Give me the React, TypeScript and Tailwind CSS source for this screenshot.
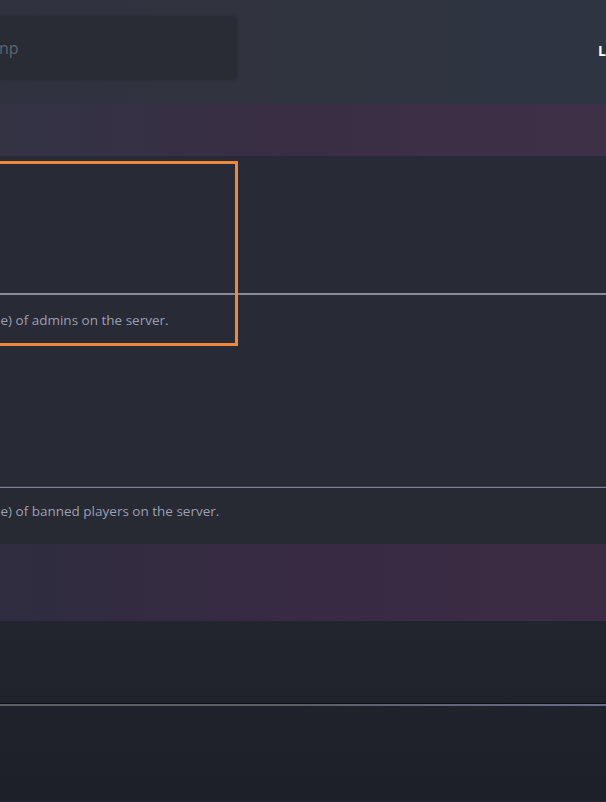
import React from "react";

function Description({ text }: { text: string }) {
  return (
    <div className="-ml-[22px] whitespace-nowrap text-[13.5px] leading-[16px] text-[#9c9fb2]">
      {text}
    </div>
  );
}

export default function App() {
  return (
    <div
      className="relative h-[802px] w-[606px] overflow-hidden bg-[#282b35]"
      style={{ fontFamily: '"Open Sans", "Noto Sans", sans-serif' }}
    >
      {/* Header */}
      <div className="flex h-[104px] items-start bg-gradient-to-r from-[#30333f] via-[#30343f] to-[#2f3443]">
        <div className="mt-[17px] flex h-[62px] w-[236px] shrink-0 items-center bg-[#292c35] shadow-[0_0_3px_rgba(0,0,0,0.35)]">
          <span className="-ml-[1px] text-[16px] text-[#5d6372]">np</span>
        </div>
        <div className="ml-[362px] mt-[40px] whitespace-nowrap text-[14px] font-bold tracking-wide text-white">
          LOGIN
        </div>
      </div>

      {/* Band 1 */}
      <div className="h-[52px] bg-gradient-to-r from-[#333344] via-[#3a2e45] to-[#3e3047]" />

      {/* Section 1 */}
      <div className="flex flex-col bg-[#282b35]">
        <div className="h-[137px]" />
        <div className="h-[2px] bg-[#878a93]" />
        <div className="h-[52px] pt-[17px]">
          <Description text="Type) of admins on the server." />
        </div>
        <div className="h-[139px]" />
        <div className="h-[1px] bg-[#3a3d48]" />
        <div className="h-[1px] bg-[#7e8190]" />
        <div className="h-[56px] bg-[#272a33] pt-[15px]">
          <Description text="Type) of banned players on the server." />
        </div>
      </div>

      {/* Band 2 */}
      <div className="h-[77px] bg-gradient-to-r from-[#2f2d3f] via-[#382a43] to-[#3b2c43]" />

      {/* Bottom */}
      <div className="flex h-[180px] flex-col bg-gradient-to-b from-[#22252e] to-[#1e2029]">
        <div className="h-[82px]" />
        <div className="h-[1px] bg-[#0c0e18]" />
        <div className="h-[2px] bg-gradient-to-r from-[#5c5e65] via-[#5c5e65] to-[#6b6c8c]" />
      </div>

      {/* Annotation overlay */}
      <div className="absolute left-[-10px] top-[161px] h-[185px] w-[248px] border-[3px] border-[#f0873b]" />
    </div>
  );
}
